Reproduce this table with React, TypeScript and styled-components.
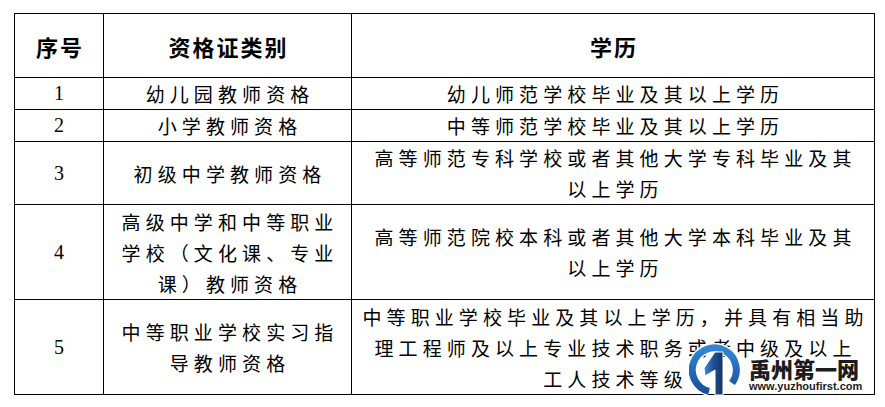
import React from "react";
import styled, { createGlobalStyle } from "styled-components";

const GlobalStyle = createGlobalStyle`
  html, body { margin: 0; padding: 0; background: #ffffff; }
  body { font-family: "Noto Sans CJK SC", "Noto Sans", sans-serif; color: #000; }
`;

const Page = styled.div`
  position: relative;
  width: 885px;
  height: 407px;
  padding: 13px 0 0 14px;
  box-sizing: border-box;
  overflow: hidden;
`;

const Table = styled.table`
  border-collapse: collapse;
  table-layout: fixed;
  width: 860px;
`;

const Row = styled.tr<{ $h: number }>`
  height: ${(p) => p.$h}px;
`;

const HeadCell = styled.th`
  border: 1px solid #000;
  padding: 0 0 0 2px;
  font-family: "Noto Sans CJK SC", sans-serif;
  font-weight: 700;
  font-size: 22px;
  letter-spacing: 2px;
  text-align: center;
  vertical-align: middle;
  color: #000;
`;

const NumCell = styled.td`
  border: 1px solid #000;
  padding: 0;
  font-family: "Liberation Serif", "Times New Roman", serif;
  font-size: 20px;
  text-align: center;
  vertical-align: middle;
  color: #000;
`;

const TextCell = styled.td`
  border: 1px solid #000;
  padding: 0 0 0 5px;
  font-family: "Noto Sans CJK SC", sans-serif;
  font-weight: 400;
  font-size: 19px;
  letter-spacing: 5.1px;
  line-height: 31px;
  white-space: nowrap;
  text-align: center;
  vertical-align: middle;
  color: #000;
`;

const Watermark = styled.div`
  position: absolute;
  left: 689px;
  top: 343px;
  display: flex;
  align-items: center;
  gap: 8px;
`;

const LogoText = styled.div`
  display: flex;
  flex-direction: column;
  align-items: flex-start;
  padding-top: 8px;
`;

const Brand = styled.div`
  font-family: "Noto Sans CJK SC", sans-serif;
  font-weight: 900;
  font-size: 22px;
  line-height: 24px;
  letter-spacing: 0px;
  color: #1c1c1c;
  text-shadow: 0 0 2px #fff, 0 0 2px #fff, 0 0 3px #fff;
`;

const Url = styled.div`
  font-family: "Liberation Sans", Arial, sans-serif;
  font-weight: 700;
  font-size: 11px;
  line-height: 13px;
  color: #1c1c1c;
  text-shadow: 0 0 2px #fff, 0 0 2px #fff;
`;

const Logo = () => (
  <svg width="52" height="54" viewBox="0 0 52 54">
    <defs>
      <linearGradient id="arcG" x1="0" y1="0" x2="0" y2="1">
        <stop offset="0" stopColor="#2f86d6" />
        <stop offset="1" stopColor="#1a4f9a" />
      </linearGradient>
      <linearGradient id="oneG" x1="0" y1="0" x2="1" y2="0">
        <stop offset="0" stopColor="#3a8ede" />
        <stop offset="0.5" stopColor="#1f4f95" />
        <stop offset="1" stopColor="#16335f" />
      </linearGradient>
    </defs>
    <path
      d="M 20 48.3 A 22 22 0 1 1 43 40"
      fill="none"
      stroke="#ffffff"
      strokeWidth="10"
    />
    <path
      d="M 20 48.3 A 22 22 0 1 1 43 40"
      fill="none"
      stroke="url(#arcG)"
      strokeWidth="7"
    />
    <polygon
      points="26,9 34,9 34,52 26,52 26,27 16,33 15,25"
      fill="url(#oneG)"
      stroke="#ffffff"
      strokeWidth="1"
    />
  </svg>
);

type RowData = { n: string; cat: React.ReactNode; edu: React.ReactNode; h: number };

const rows: RowData[] = [
  { n: "1", cat: "幼儿园教师资格", edu: "幼儿师范学校毕业及其以上学历", h: 32 },
  { n: "2", cat: "小学教师资格", edu: "中等师范学校毕业及其以上学历", h: 32 },
  {
    n: "3",
    cat: "初级中学教师资格",
    edu: (
      <>
        高等师范专科学校或者其他大学专科毕业及其
        <br />
        以上学历
      </>
    ),
    h: 63,
  },
  {
    n: "4",
    cat: (
      <>
        高级中学和中等职业
        <br />
        学校（文化课、专业
        <br />
        课）教师资格
      </>
    ),
    edu: (
      <>
        高等师范院校本科或者其他大学本科毕业及其
        <br />
        以上学历
      </>
    ),
    h: 95,
  },
  {
    n: "5",
    cat: (
      <>
        中等职业学校实习指
        <br />
        导教师资格
      </>
    ),
    edu: (
      <>
        中等职业学校毕业及其以上学历，并具有相当助
        <br />
        理工程师及以上专业技术职务或者中级及以上
        <br />
        工人技术等级
      </>
    ),
    h: 95,
  },
];

export default function App() {
  return (
    <>
      <GlobalStyle />
      <Page>
        <Table>
          <colgroup>
            <col style={{ width: 89 }} />
            <col style={{ width: 248 }} />
            <col style={{ width: 523 }} />
          </colgroup>
          <thead>
            <Row $h={64}>
              <HeadCell>序号</HeadCell>
              <HeadCell>资格证类别</HeadCell>
              <HeadCell>学历</HeadCell>
            </Row>
          </thead>
          <tbody>
            {rows.map((r) => (
              <Row key={r.n} $h={r.h}>
                <NumCell>{r.n}</NumCell>
                <TextCell>{r.cat}</TextCell>
                <TextCell>{r.edu}</TextCell>
              </Row>
            ))}
          </tbody>
        </Table>
        <Watermark>
          <Logo />
          <LogoText>
            <Brand>禹州第一网</Brand>
            <Url>www.yuzhoufirst.com</Url>
          </LogoText>
        </Watermark>
      </Page>
    </>
  );
}
